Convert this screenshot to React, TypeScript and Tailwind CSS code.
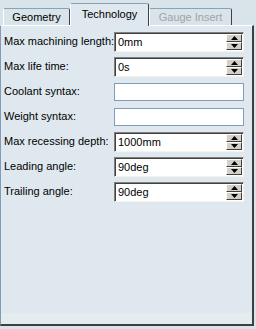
import type { ReactNode } from "react";

const rows: { label: string; value?: string; spin: boolean }[] = [
  { label: "Max machining length:", value: "0mm", spin: true },
  { label: "Max life time:", value: "0s", spin: true },
  { label: "Coolant syntax:", spin: false },
  { label: "Weight syntax:", spin: false },
  { label: "Max recessing depth:", value: "1000mm", spin: true },
  { label: "Leading angle:", value: "90deg", spin: true },
  { label: "Trailing angle:", value: "90deg", spin: true },
];

function Arrow({ up }: { up?: boolean }) {
  return (
    <div className="flex-1 flex items-center justify-center bg-[#d4d0c8] border-t border-l border-t-white border-l-white border-b border-r border-b-[#404040] border-r-[#404040]">
      <svg width="7" height="4" viewBox="0 0 7 4">
        {up ? <polygon points="3.5,0 7,4 0,4" fill="#000" /> : <polygon points="0,0 7,0 3.5,4" fill="#000" />}
      </svg>
    </div>
  );
}

function SpinBox({ value }: { value: string }) {
  return (
    <div className="w-[130px] h-[20px] flex items-center bg-white border border-t-[#808080] border-l-[#808080] border-b-[#f4f3ee] border-r-[#f4f3ee] shadow-[inset_1px_1px_0_#404040]">
      <span className="flex-1 pl-[3px] pt-[1px] text-[11px] text-black">{value}</span>
      <div className="w-[16px] h-[16px] mr-[1px] flex flex-col">
        <Arrow up />
        <Arrow />
      </div>
    </div>
  );
}

function Tab({ children, active, disabled, className }: { children: ReactNode; active?: boolean; disabled?: boolean; className: string }) {
  return (
    <div
      className={
        "flex items-center justify-center rounded-t-[2px] border-t border-l border-r border-t-[#8aa2b4] border-l-white border-r-[#404040] whitespace-nowrap " +
        (active ? "bg-[#dfe8ef] h-[23px] -mb-[1px] z-10 pb-[1px] " : "bg-[#d9e4ea] h-[17px] ") +
        (disabled ? "text-[#a3a3a3] " : "text-black ") +
        className
      }
    >
      {children}
    </div>
  );
}

export default function App() {
  return (
    <div className="w-[256px] h-[329px] bg-[#d9e4ea] font-['Liberation_Sans',Arial,sans-serif] text-[11px] overflow-hidden">
      <div className="h-[25px] flex items-end pl-[3px]">
        <Tab className="w-[67px]">Geometry</Tab>
        <Tab active className="w-[79px]">Technology</Tab>
        <Tab disabled className="w-[83px]">Gauge Insert</Tab>
      </div>
      <div className="w-[254px] h-[301px] flex flex-col bg-[#dfe8ef] border-l border-l-[#7f9db9] border-t border-t-white border-r-2 border-r-[#404040] border-b-2 border-b-[#404040]">
        <div className="flex-1 flex flex-col gap-[5px] pt-[6px]">
          {rows.map((r) => (
            <div key={r.label} className="flex items-start h-[20px]">
              <div className="w-[113px] pl-[3px] pt-[2px] text-black leading-[14px] whitespace-nowrap">{r.label}</div>
              {r.spin ? (
                <SpinBox value={r.value ?? ""} />
              ) : (
                <div className="w-[130px] h-[18px] mt-[1px] bg-white border border-[#7f9db9]" />
              )}
            </div>
          ))}
        </div>
        <div className="h-[11px] bg-[#e4ecf0]" />
      </div>
    </div>
  );
}
